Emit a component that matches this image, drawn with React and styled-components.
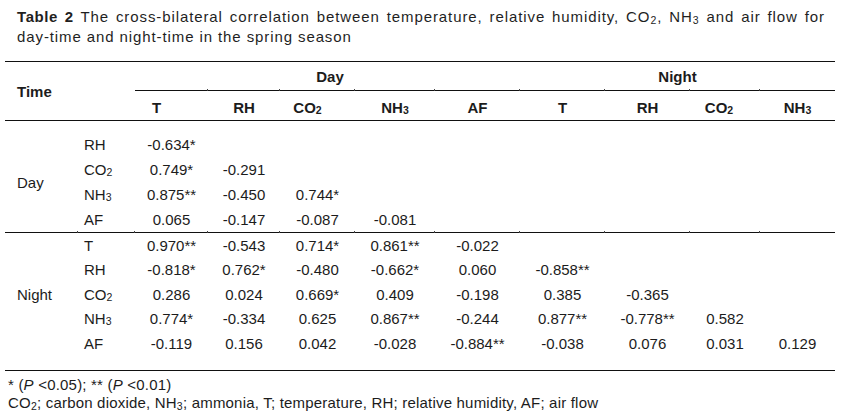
import React from "react";
import styled, { createGlobalStyle } from "styled-components";

const COLS = "73px 57px 73px 72px 75px 80px 85px 85px 85px 70px 75px";

const Global = createGlobalStyle`
  html, body { margin: 0; padding: 0; background: #ffffff; }
  body { font-family: "Liberation Sans", Arial, sans-serif; color: #1c1c1c; }
`;

const Page = styled.div`
  width: 846px;
  height: 413px;
  overflow: hidden;
  background: #fff;
`;

const Caption = styled.div`
  height: 47px;
  box-sizing: border-box;
  padding: 7px 21px 0 17px;
  font-family: "Liberation Sans", Arial, sans-serif;
  font-size: 15px;
  line-height: 20px;
  letter-spacing: 0.9px;
  color: #1f1f1f;
`;

const CaptionLine = styled.div`
  white-space: nowrap;
  text-align: ${(p) => (p.$justify ? "justify" : "left")};
  text-align-last: ${(p) => (p.$justify ? "justify" : "auto")};
`;

const Strong = styled.b`
  font-weight: bold;
  letter-spacing: 0.6px;
`;

const Sub = styled.sub`
  font-size: 0.7em;
  vertical-align: baseline;
  position: relative;
  top: 0.22em;
  line-height: 0;
`;

const Table = styled.div`
  margin: 14px 0 0 5px;
  width: 830px;
  border-top: 1px solid #111;
  border-bottom: 1px solid #111;
  font-family: "Liberation Sans", Arial, sans-serif;
  font-size: 15px;
  color: #1c1c1c;
`;

const Head = styled.div`
  display: grid;
  grid-template-columns: ${COLS};
  grid-template-rows: 29px 29px;
  border-bottom: 1px solid #111;
  font-weight: bold;
`;

const TimeCell = styled.div`
  grid-column: 1 / span 2;
  grid-row: 1 / span 2;
  display: flex;
  align-items: center;
  padding-left: 12px;
  padding-top: 1px;
`;

const GroupHead = styled.div`
  grid-column: ${(p) => p.$cols};
  grid-row: 1;
  box-sizing: border-box;
  border-bottom: 1px solid #111;
  display: flex;
  align-items: center;
  justify-content: center;
  padding-left: ${(p) => p.$offset || 0}px;
`;

const Tick = styled.div`
  position: relative;
  &::before {
    content: "";
    display: ${(p) => (p.$tick ? "block" : "none")};
    position: absolute;
    left: -1px;
    top: -2px;
    width: 1px;
    height: 2px;
    background: #444;
  }
`;

const ColHead = styled(Tick)`
  grid-row: 2;
  display: flex;
  align-items: center;
  justify-content: center;
  padding-right: ${(p) => p.$shift || 0}px;
  padding-top: 4px;
`;

const Group = styled.div`
  display: grid;
  grid-template-columns: ${COLS};
  grid-template-rows: repeat(${(p) => p.$n}, ${(p) => p.$row}px);
  padding-top: ${(p) => p.$top}px;
  padding-bottom: ${(p) => p.$bottom}px;
  border-bottom: ${(p) => (p.$rule ? "1px solid #111" : "none")};
`;

const GroupLabel = styled.div`
  grid-column: 1;
  grid-row: 1 / -1;
  align-self: center;
  padding-left: 12px;
`;

const RowLabel = styled(Tick)`
  grid-column: 2;
  padding-left: 6px;
  display: flex;
  align-items: center;
`;

const Value = styled(Tick)`
  display: flex;
  align-items: center;
  justify-content: center;
`;

const Notes = styled.div`
  margin: 5px 0 0 8px;
  font-family: "Liberation Sans", Arial, sans-serif;
  font-size: 15px;
  line-height: 18px;
  letter-spacing: 0.2px;
  color: #1c1c1c;
`;

const Line = styled.div`
  white-space: nowrap;
`;

const Ital = styled.i``;

const sub = (base, n) => (
  <>
    {base}
    <Sub>{n}</Sub>
  </>
);

const VARS = {
  T: "T",
  RH: "RH",
  CO2: sub("CO", "2"),
  NH3: sub("NH", "3"),
  AF: "AF",
};

const headers = [
  { k: "T", shift: 30 },
  { k: "RH" },
  { k: "CO2", shift: 20 },
  { k: "NH3" },
  { k: "AF" },
  { k: "T" },
  { k: "RH" },
  { k: "CO2", shift: 12 },
  { k: "NH3" },
];

const dayRows = [
  { k: "RH", v: ["-0.634*"] },
  { k: "CO2", v: ["0.749*", "-0.291"] },
  { k: "NH3", v: ["0.875**", "-0.450", "0.744*"] },
  { k: "AF", v: ["0.065", "-0.147", "-0.087", "-0.081"] },
];

const nightRows = [
  { k: "T", v: ["0.970**", "-0.543", "0.714*", "0.861**", "-0.022"] },
  { k: "RH", v: ["-0.818*", "0.762*", "-0.480", "-0.662*", "0.060", "-0.858**"] },
  { k: "CO2", v: ["0.286", "0.024", "0.669*", "0.409", "-0.198", "0.385", "-0.365"] },
  { k: "NH3", v: ["0.774*", "-0.334", "0.625", "0.867**", "-0.244", "0.877**", "-0.778**", "0.582"] },
  { k: "AF", v: ["-0.119", "0.156", "0.042", "-0.028", "-0.884**", "-0.038", "0.076", "0.031", "0.129"] },
];

function Rows({ rows, tickFirst }) {
  return rows.map((r, ri) => {
    const tick = tickFirst && ri === 0;
    const cells = [];
    for (let i = 0; i < 9; i++) {
      cells.push(
        <Value key={i} $tick={tick} style={{ gridRow: ri + 1, gridColumn: i + 3 }}>
          {r.v[i] || ""}
        </Value>
      );
    }
    return (
      <React.Fragment key={ri}>
        <RowLabel $tick={tick} style={{ gridRow: ri + 1 }}>
          {VARS[r.k]}
        </RowLabel>
        {cells}
      </React.Fragment>
    );
  });
}

export default function App() {
  return (
    <Page>
      <Global />
      <Caption>
        <CaptionLine $justify>
          <Strong>Table 2</Strong> The cross-bilateral correlation between temperature, relative humidity,
          CO<Sub>2</Sub>, NH<Sub>3</Sub> and air flow for
        </CaptionLine>
        <CaptionLine>day-time and night-time in the spring season</CaptionLine>
      </Caption>
      <Table>
        <Head>
          <TimeCell>Time</TimeCell>
          <GroupHead $cols="3 / span 5" $offset={5}>Day</GroupHead>
          <GroupHead $cols="8 / span 4">Night</GroupHead>
          {headers.map((h, i) => (
            <ColHead key={i} $tick={i > 0} $shift={h.shift} style={{ gridColumn: i + 3 }}>
              {VARS[h.k]}
            </ColHead>
          ))}
        </Head>
        <Group $n={dayRows.length} $row={25} $top={11} $bottom={0} $rule>
          <GroupLabel>Day</GroupLabel>
          <Rows rows={dayRows} />
        </Group>
        <Group $n={nightRows.length} $row={24.5} $top={0} $bottom={14.5}>
          <GroupLabel>Night</GroupLabel>
          <Rows rows={nightRows} tickFirst />
        </Group>
      </Table>
      <Notes>
        <Line>
          * (<Ital>P</Ital> &lt;0.05); ** (<Ital>P</Ital> &lt;0.01)
        </Line>
        <Line>
          CO<Sub>2</Sub>; carbon dioxide, NH<Sub>3</Sub>; ammonia, T; temperature, RH; relative humidity, AF; air flow
        </Line>
      </Notes>
    </Page>
  );
}
